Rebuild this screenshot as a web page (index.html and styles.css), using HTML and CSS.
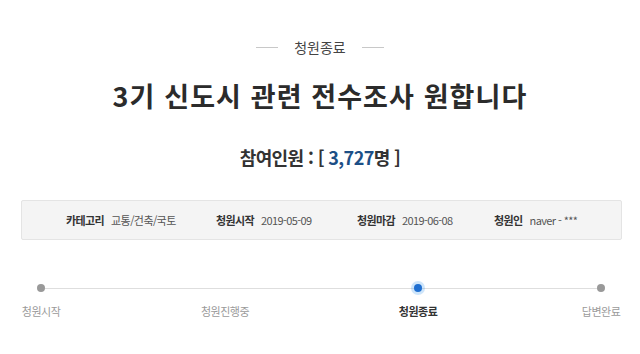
FILE: index.html
```html
<!DOCTYPE html>
<html lang="ko">
<head>
  <meta charset="UTF-8" />
  <meta name="viewport" content="width=device-width, initial-scale=1.0"/>
  <title>청원종료 - 3기 신도시 관련 전수조사 원합니다</title>
  <link rel="stylesheet" href="styles.css">
</head>
<body>

  <div class="status"><span>청원종료</span></div>
  <h1 class="title">3기 신도시 관련 전수조사 원합니다</h1>
  <p class="count">참여인원 : [ <span class="num">3,727</span>명 ]</p>

  <div class="info">
    <div class="info-item"><b>카테고리</b><span>교통/건축/국토</span></div>
    <div class="info-item"><b>청원시작</b><span>2019-05-09</span></div>
    <div class="info-item"><b>청원마감</b><span>2019-06-08</span></div>
    <div class="info-item"><b>청원인</b><span>naver - ***</span></div>
  </div>

  <div class="steps">
    <div class="step">
      <i class="dot"></i>
      <span>청원시작</span>
    </div>
    <div class="step">
      <i class="dot none"></i>
      <span>청원진행중</span>
    </div>
    <div class="step current">
      <i class="dot"></i>
      <span>청원종료</span>
    </div>
    <div class="step">
      <i class="dot"></i>
      <span>답변완료</span>
    </div>
  </div>

</body>
</html>
```

FILE: styles.css
```css
body {
  margin: 0;
  font-family: 'Noto Sans CJK KR', 'Noto Sans', sans-serif;
  background: #fff;
  color: #333;
}

.status {
  margin-top: 37px;
  display: flex;
  justify-content: center;
  align-items: center;
  gap: 16px;
  font-size: 14px;
  line-height: 20px;
  color: #444;
  letter-spacing: 0;
}

.status::before,
.status::after {
  content: "";
  width: 22px;
  height: 1px;
  background: #c8c8c8;
}

.title {
  margin: 19px 0 0;
  text-align: center;
  font-size: 27px;
  line-height: 40px;
  font-weight: bold;
  color: #2b2b2b;
  letter-spacing: 1.1px;
}

.count {
  margin: 28px 0 0;
  text-align: center;
  font-size: 18px;
  line-height: 26px;
  font-weight: bold;
  color: #333;
  letter-spacing: -0.6px;
}

.count .num {
  color: #1d4f86;
}

.info {
  margin: 30px 18px 0 21px;
  height: 40px;
  box-sizing: border-box;
  background: #f4f4f4;
  border: 1px solid #e4e4e4;
  border-radius: 2px;
  padding-left: 44px;
  display: grid;
  grid-template-columns: 150px 141px 137px auto;
  align-items: center;
  font-size: 11px;
  letter-spacing: -0.6px;
}

.info-item b {
  color: #333;
  margin-right: 7px;
}

.info-item span {
  color: #555;
}

.steps {
  margin: 44px 0 0 41px;
  width: 560px;
  display: grid;
  grid-template-columns: 184px 193px 183px 0;
  position: relative;
}

.steps::before {
  content: "";
  position: absolute;
  left: 0;
  right: 0;
  top: 4px;
  height: 1px;
  background: #dedede;
}

.step {
  display: flex;
  flex-direction: column;
  align-items: center;
  width: 0;
  font-size: 11px;
  color: #9a9a9a;
  letter-spacing: -0.5px;
  white-space: nowrap;
}

.dot {
  width: 8px;
  height: 8px;
  border-radius: 50%;
  background: #999;
  position: relative;
  margin-bottom: 11px;
}

.dot.none {
  visibility: hidden;
}

.step.current {
  color: #333;
  font-weight: bold;
}

.step.current .dot {
  background: #1f6fd1;
  box-shadow: 0 0 0 3px rgba(60, 150, 235, 0.25);
}
```
